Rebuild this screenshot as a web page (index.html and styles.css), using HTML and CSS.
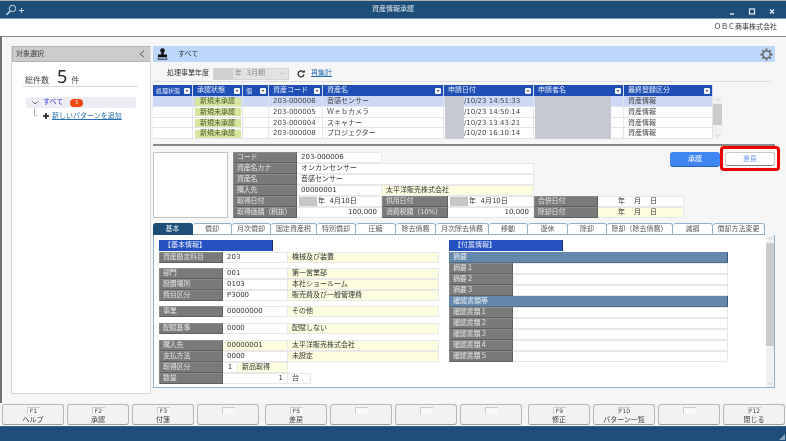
FILE: index.html
```html
<!DOCTYPE html>
<html lang="ja">
<head>
<meta charset="utf-8">
<title>資産情報承認</title>
<link rel="stylesheet" href="styles.css">
</head>
<body>
<div class="window">
  <header class="titlebar">
    <svg class="logo" width="20" height="12" viewBox="0 0 20 12"><circle cx="7.5" cy="4.5" r="3.2" fill="none" stroke="#cfe0ee" stroke-width="1"/><path d="M5.2 7 L1.5 10.8" stroke="#cfe0ee" stroke-width="1.4"/><path d="M14 6.5h5M16.5 4v5" stroke="#cfe0ee" stroke-width="1"/></svg>
    <div class="title">資産情報承認</div>
    <div class="winctl">
      <svg width="48" height="10" viewBox="0 0 48 10"><path d="M1 9h4" stroke="#e8f0f6" stroke-width="1.4"/><rect x="20.5" y="4" width="5" height="5" fill="none" stroke="#e8f0f6" stroke-width="1.2"/><path d="M41 4.5l4 4M45 4.5l-4 4" stroke="#e8f0f6" stroke-width="1.3"/></svg>
    </div>
  </header>
  <div class="company">ＯＢＣ商事株式会社</div>
  <main class="main">
    <aside class="side">
      <div class="side-head"><span>対象選択</span><svg width="6" height="8" viewBox="0 0 6 8"><path d="M5 1L1 4l4 3" fill="none" stroke="#444" stroke-width="0.8"/></svg></div>
      <div class="total"><span>総件数</span><b>5</b><span>件</span></div>
      <div class="tree-sel">
        <svg width="6" height="4" viewBox="0 0 6 4"><path d="M0.5 0.5L3 3l2.5-2.5" fill="none" stroke="#445" stroke-width="0.8"/></svg>
        <span class="tree-all">すべて</span><span class="badge">5</span>
      </div>
      <div class="tree-add">
        <span class="elbow"></span>
        <svg width="6" height="6" viewBox="0 0 6 6"><path d="M3 0v6M0 3h6" stroke="#111" stroke-width="1.5"/></svg>
        <a class="link">新しいパターンを追加</a>
      </div>
    </aside>
    <section class="content">
      <div class="banner">
        <svg width="11" height="12" viewBox="0 0 11 12"><circle cx="5.5" cy="2.5" r="2.3" fill="#111"/><rect x="4.3" y="4" width="2.4" height="3" fill="#111"/><rect x="1" y="6.5" width="9" height="2.5" fill="#111"/><rect x="1" y="10" width="9" height="1.5" fill="none" stroke="#111" stroke-width="0.6"/></svg>
        <span class="banner-text">すべて</span>
        <svg class="gear" width="13" height="13" viewBox="0 0 13 13"><g stroke="#666" stroke-width="1.8"><path d="M6.5 0.5v12M0.5 6.5h12M2.3 2.3l8.4 8.4M10.7 2.3l-8.4 8.4"/></g><circle cx="6.5" cy="6.5" r="3.6" fill="#bcd7fb" stroke="#666" stroke-width="1.3"/></svg>
      </div>
      <div class="yearrow">
        <span>処理事業年度</span>
        <div class="yearsel"><i class="yearmask"></i><span>年&nbsp;&nbsp;3月期</span><svg width="5" height="3" viewBox="0 0 5 3"><path d="M0.5 0.5L2.5 2.5l2-2" fill="none" stroke="#aaa" stroke-width="0.6"/></svg></div>
        <svg class="refresh" width="8" height="8" viewBox="0 0 8 8"><path d="M6.6 2.2A3 3 0 1 0 7 4.5" fill="none" stroke="#222" stroke-width="1.2"/><path d="M5 2.6h2.8V0z" fill="#222"/></svg>
        <a class="link">再集計</a>
      </div>
      <div class="gridwrap">
        <div class="table">
          <div class="trow thead">
            <div class="th small">処理状態<i></i></div><div class="th">承認状態<i></i></div><div class="th small">個<i></i></div><div class="th">資産コード<i></i></div><div class="th">資産名<i></i></div><div class="th">申請日付<i></i></div><div class="th">申請者名<i></i></div><div class="th">最終登録区分<i></i></div>
          </div>
          <div class="trow sel">
            <div class="td"></div><div class="td"><span class="tag">新規未承認</span></div><div class="td"></div><div class="td">203-000006</div><div class="td">音感センサー</div><div class="td date"><i class="mask"></i>/10/23 14:51:33</div><div class="td"><i class="mask wide"></i></div><div class="td">資産情報</div>
          </div>
          <div class="trow">
            <div class="td"></div><div class="td"><span class="tag">新規未承認</span></div><div class="td"></div><div class="td">203-000005</div><div class="td">Ｗｅｂカメラ</div><div class="td date"><i class="mask"></i>/10/23 14:50:14</div><div class="td"><i class="mask wide"></i></div><div class="td">資産情報</div>
          </div>
          <div class="trow">
            <div class="td"></div><div class="td"><span class="tag">新規未承認</span></div><div class="td"></div><div class="td">203-000004</div><div class="td">スキャナー</div><div class="td date"><i class="mask"></i>/10/23 13:43:21</div><div class="td"><i class="mask wide"></i></div><div class="td">資産情報</div>
          </div>
          <div class="trow">
            <div class="td"></div><div class="td"><span class="tag">新規未承認</span></div><div class="td"></div><div class="td">203-000008</div><div class="td">プロジェクター</div><div class="td date"><i class="mask"></i>/10/20 16:10:14</div><div class="td"><i class="mask wide"></i></div><div class="td">資産情報</div>
          </div>
        </div>
        <div class="vscroll grid-scroll">
          <svg width="5" height="3" viewBox="0 0 5 3"><path d="M0.5 2.5L2.5 0.5l2 2" fill="none" stroke="#b0b0b0" stroke-width="0.6"/></svg>
          <i class="thumb"></i>
          <svg class="down" width="5" height="3" viewBox="0 0 5 3"><path d="M0.5 0.5L2.5 2.5l2-2" fill="none" stroke="#b0b0b0" stroke-width="0.6"/></svg>
        </div>
      </div>
      <div class="splitter"></div>
      <div class="detail">
        <div class="photo"></div>
        <div class="info">
          <div class="lbl">コード</div><div class="val">203-000006</div><div class="blank s4"></div>
          <div class="lbl">資産名カナ</div><div class="val s3">オンカンセンサー</div><div class="blank s2"></div>
          <div class="lbl">資産名</div><div class="val s3">音感センサー</div><div class="blank s2"></div>
          <div class="lbl">購入先</div><div class="val">00000001</div><div class="val yel s2">太平洋販売株式会社</div><div class="blank s2"></div>
          <div class="lbl">取得日付</div><div class="val datev"><i class="mask-y"></i><span>年&nbsp;&nbsp;4月10日</span></div><div class="lbl">供用日付</div><div class="val datev"><i class="mask-y"></i><span>年&nbsp;&nbsp;4月10日</span></div><div class="lbl">合併日付</div><div class="val ymd"><span>年</span><span>月</span><span>日</span></div>
          <div class="lbl">取得価額（税抜）</div><div class="val num">100,000</div><div class="lbl">消費税額（10%）</div><div class="val num">10,000</div><div class="lbl">除却日付</div><div class="val yel ymd"><span>年</span><span>月</span><span>日</span></div>
        </div>
        <div class="actions">
          <button class="btn primary">承認</button>
          <div class="hl"><button class="btn plain">差戻</button></div>
        </div>
      </div>
      <div class="tabs">
        <div class="tab on">基本</div><div class="tab">償却</div><div class="tab">月次償却</div><div class="tab">固定資産税</div><div class="tab">特別償却</div><div class="tab">圧縮</div><div class="tab">除去債務</div><div class="tab">月次除去債務</div><div class="tab">移動</div><div class="tab">遊休</div><div class="tab">除却</div><div class="tab">除却（除去債務）</div><div class="tab">減損</div><div class="tab">償却方法変更</div>
      </div>
      <div class="panel">
        <div class="panel-body">
          <div class="col">
            <div class="sect">【基本情報】</div>
            <div class="frow"><div class="lbl">資産勘定科目</div><div class="val">203</div><div class="val yel">機械及び装置</div></div>
            <div class="frow gap5"><div class="lbl">部門</div><div class="val">001</div><div class="val yel">第一営業部</div></div>
            <div class="frow"><div class="lbl">設置場所</div><div class="val">0103</div><div class="val yel">本社ショールーム</div></div>
            <div class="frow"><div class="lbl">費目区分</div><div class="val">P3000</div><div class="val yel">販売費及び一般管理費</div></div>
            <div class="frow gap5"><div class="lbl">事業</div><div class="val">00000000</div><div class="val yel">その他</div></div>
            <div class="frow gap6"><div class="lbl">配賦基準</div><div class="val">0000</div><div class="val yel">配賦しない</div></div>
            <div class="frow gap6"><div class="lbl">購入先</div><div class="val yel">00000001</div><div class="val yel">太平洋販売株式会社</div></div>
            <div class="frow"><div class="lbl">支払方法</div><div class="val">0000</div><div class="val yel">未設定</div></div>
            <div class="frow kubun"><div class="lbl">取得区分</div><div class="val center">1</div><div class="val yel">新品取得</div></div>
            <div class="frow qty"><div class="lbl">数量</div><div class="val num">1</div><div class="val">台</div></div>
          </div>
          <div class="col">
            <div class="sect">【付属情報】</div>
            <div class="subhead">摘要</div>
            <div class="frow2"><div class="lbl">摘要１</div><div class="val"></div></div>
            <div class="frow2"><div class="lbl">摘要２</div><div class="val"></div></div>
            <div class="frow2"><div class="lbl">摘要３</div><div class="val"></div></div>
            <div class="subhead">確認書類等</div>
            <div class="frow2"><div class="lbl">確認書類１</div><div class="val"></div></div>
            <div class="frow2"><div class="lbl">確認書類２</div><div class="val"></div></div>
            <div class="frow2"><div class="lbl">確認書類３</div><div class="val"></div></div>
            <div class="frow2"><div class="lbl">確認書類４</div><div class="val"></div></div>
            <div class="frow2"><div class="lbl">確認書類５</div><div class="val"></div></div>
          </div>
        </div>
        <div class="vscroll panel-scroll">
          <svg width="5" height="3" viewBox="0 0 5 3"><path d="M0.5 2.5L2.5 0.5l2 2" fill="none" stroke="#b0b0b0" stroke-width="0.6"/></svg>
          <i class="thumb"></i>
          <svg class="down" width="5" height="3" viewBox="0 0 5 3"><path d="M0.5 0.5L2.5 2.5l2-2" fill="none" stroke="#b0b0b0" stroke-width="0.6"/></svg>
        </div>
      </div>
    </section>
  </main>
  <nav class="fkeys">
    <div class="fgroup">
      <button class="fk"><span class="fn">F1</span><span>ヘルプ</span></button>
      <button class="fk"><span class="fn">F2</span><span>承認</span></button>
      <button class="fk"><span class="fn">F3</span><span>付箋</span></button>
      <button class="fk"><span class="fn empty"></span></button>
    </div>
    <div class="fgroup">
      <button class="fk"><span class="fn">F5</span><span>差戻</span></button>
      <button class="fk"><span class="fn empty"></span></button>
      <button class="fk"><span class="fn empty"></span></button>
      <button class="fk"><span class="fn empty"></span></button>
    </div>
    <div class="fgroup">
      <button class="fk"><span class="fn">F9</span><span>修正</span></button>
      <button class="fk"><span class="fn">F10</span><span>パターン一覧</span></button>
      <button class="fk"><span class="fn empty"></span></button>
      <button class="fk"><span class="fn">F12</span><span>閉じる</span></button>
    </div>
  </nav>
  <footer class="statusbar">
    <svg width="6" height="6" viewBox="0 0 6 6"><path d="M6 0v6H0z" fill="#8aa5bb"/></svg>
  </footer>
</div>
</body>
</html>
```
FILE: styles.css
```css
* { box-sizing: border-box; margin: 0; padding: 0; }
html, body { width: 786px; height: 441px; overflow: hidden; background: #fff; }
body { font-family: "DejaVu Sans", "Noto Sans CJK JP", sans-serif; font-size: 7px; line-height: 1; color: #333; }
i { display: block; font-style: normal; }
button { font-family: inherit; font-size: 7px; line-height: 1; }

.window { width: 786px; height: 441px; display: flex; flex-direction: column; filter: blur(0.3px); }

.titlebar { height: 19px; flex: none; display: grid; grid-template-columns: 1fr auto 1fr; align-items: center; background: #1c4e78; border-top: 1px solid #b0b0b0; border-bottom: 1px solid #7e9ab0; padding: 0 5px; }
.title { color: #dfe8ef; }
.winctl { justify-self: end; padding-right: 4px; display: flex; }

.company { height: 17px; flex: none; background: #fff; display: flex; align-items: center; justify-content: flex-end; padding-right: 9px; color: #333; }

.main { flex: none; height: 367px; display: flex; gap: 2px; background: #f6f6f6; border-top: 1px solid #8c8c8c; border-left: 2px solid #707070; padding: 9px 0 0 9px; }

.side { width: 140px; height: 348px; background: #fff; border: 1px solid #d8d8d8; border-top: 0; }
.side-head { height: 16px; background: #cbcbcb; border: 1px solid #b4b4b4; border-width: 1px 0 1px 1px; display: flex; align-items: center; justify-content: space-between; padding: 0 5px 0 3px; color: #444; }
.total { margin: 3px 12px 0 11px; height: 22px; border-bottom: 1px solid #d6d6d6; display: flex; align-items: baseline; font-size: 8px; padding: 0 0 0 2px; color: #444; }
.total b { font-weight: 400; font-size: 18px; margin: 0 4px 0 8px; color: #222; line-height: 22px; font-family: "Noto Sans", sans-serif; }
.tree-sel { margin: 10px 14px 0 14px; height: 11px; background: #ecedf3; border-radius: 3px; display: flex; align-items: center; padding-left: 6px; }
.tree-all { color: #3a3ae0; margin-left: 5px; }
.badge { margin-left: 7px; width: 13px; height: 8px; border-radius: 4px; background: #f0480f; color: #fff; font-size: 5px; display: flex; align-items: center; justify-content: center; }
.tree-add { margin: 1px 0 0 22px; height: 14px; display: flex; align-items: center; gap: 3px; }
.elbow { width: 3px; height: 8px; margin-top: -8px; margin-right: 3px; border-left: 1px solid #bbb; border-bottom: 1px solid #bbb; }
.link { color: #2a6fb0; text-decoration: underline; }

.content { width: 622px; display: flex; flex-direction: column; }
.banner { height: 16px; flex: none; background: #bcd7fb; display: flex; align-items: center; padding: 0 2px 0 4px; }
.banner-text { margin-left: 10px; }
.gear { margin-left: auto; }
.yearrow { height: 20px; width: 618px; flex: none; border-bottom: 1px solid #dcdcdc; display: flex; align-items: center; padding: 4px 0 0 14px; }
.yearsel { width: 76px; height: 12px; margin-left: 4px; background: #e2e2e2; border: 1px solid #d4d4d4; display: flex; align-items: center; color: #888; padding-right: 3px; }
.yearmask { width: 19px; height: 10px; background: #cfcfcf; margin-right: 2px; }
.yearsel svg { margin-left: auto; }
.refresh { margin-left: 8px; margin-right: 6px; }

.gridwrap { margin-top: 3px; display: flex; flex: none; height: 54px; }
.table { width: 560px; background: #fff; }
.trow { display: grid; grid-template-columns: 40px 50px 26px 54px 121px 90px 90px 89px; height: 10.75px; border-bottom: 1px solid #e2e5ea; }
.trow.thead { height: 11px; background: #1f4fb4; border-bottom: 0; }
.trow.sel { background: #cdd8f5; }
.th { color: #e4ebfa; display: flex; align-items: center; justify-content: space-between; padding: 0 2px 0 4px; border-right: 1px solid #d5def0; white-space: nowrap; }
.th.small { font-size: 6px; padding-left: 3px; }
.th i { width: 6px; height: 6px; background: #f4f4f4; border-radius: 1px; flex: none; display: flex; align-items: center; justify-content: center; }
.th i::after { content: ""; width: 0; height: 0; border: 1.5px solid transparent; border-top: 2px solid #222; border-bottom: 0; }
.td { display: flex; align-items: center; padding-left: 4px; border-right: 1px solid #e2e5ea; white-space: nowrap; color: #444; }
.td:nth-child(2) { justify-content: center; padding: 0; }
.tag { width: 46px; height: 8px; background: #d7e69c; display: flex; align-items: center; justify-content: center; color: #4a5a32; }
.date { padding-left: 1px; }
.mask { width: 19px; height: 11px; background: #c6c9cf; flex: none; }
.mask.wide { width: 76px; margin-left: -3px; }
.vscroll { background: #f1f1f1; flex: none; display: flex; flex-direction: column; align-items: center; }
.vscroll svg { flex: none; margin-top: 2px; }
.vscroll .down { margin-top: auto; margin-bottom: 2px; }
.thumb { background: #cbcbcb; width: 100%; margin-top: 3px; }
.grid-scroll { width: 9px; height: 43px; margin-top: 11px; }
.grid-scroll .thumb { height: 21px; }
.splitter { height: 2px; margin-top: 5px; background: #8a8a8a; flex: none; }

.detail { margin-top: 6px; height: 66px; display: flex; flex: none; position: relative; }
.photo { width: 75px; height: 66px; background: #fff; border: 1px solid #c4c4c4; margin-right: 5px; }
.info { width: 451px; display: grid; grid-template-columns: 64px 85px 66px 86px 64px 86px; grid-auto-rows: 11px; align-content: start; }
.lbl { background: #7a7a7a; color: #e2e2e2; display: flex; align-items: center; padding-left: 3px; border: 1px solid; border-color: #8a8a8a #5f5f5f #5f5f5f #8a8a8a; white-space: nowrap; letter-spacing: -0.2px; }
.val { background: #fff; display: flex; align-items: center; padding-left: 4px; border: 1px solid #e8e8e8; border-width: 1px 1px 1px 0; white-space: nowrap; color: #333; min-width: 0; }
.yel { background: #fdfde0; }
.s2 { grid-column: span 2; }
.s3 { grid-column: span 3; }
.s4 { grid-column: span 4; }
.num { justify-content: flex-end; padding: 0 4px 0 0; }
.datev { padding-left: 2px; }
.mask-y { width: 18px; height: 9px; background: #c6c6c6; margin-right: 1px; flex: none; }
.ymd { gap: 9px; padding-left: 20px; }

.actions { position: absolute; left: 517px; top: 0; display: flex; gap: 5px; }
.btn { width: 50px; height: 15px; border-radius: 3px; }
.primary { background: #3f86f2; color: #fff; border: 0; border-bottom: 1px solid #2a62b8; }
.plain { background: #fff; color: #6d9cf0; border: 1px solid #c8c8c8; border-bottom: 1.5px solid #8a8a8a; height: 14px; display: block; }
.hl { position: absolute; left: 50px; top: -6px; width: 60px; height: 25px; border: 3px solid #ee0000; border-radius: 4px; padding: 3px 0 0 2px; }

.tabs { margin-top: 5px; height: 12px; width: 612px; flex: none; display: grid; grid-template-columns: 40px 39px 39px 46px 39px 40px 40px 53px 39px 40px 39px 66px 40px 52px; }
.tab { background: #fff; border: 1px solid #8fb0cc; border-left: 0; border-radius: 3px 3px 0 0; display: flex; align-items: center; justify-content: center; color: #555; white-space: nowrap; }
.tab.on { background: #1c4e78; color: #e8eef4; border-color: #1c4e78; }

.panel { height: 153px; flex: none; background: #fff; border: 1px solid #8fb0cc; border-top: 0; display: flex; }
.panel-body { flex: 1; display: grid; grid-template-columns: 290px 279px; padding: 5px 0 0 5px; }
.sect { width: 114px; height: 11px; background: #2450c0; color: #e8eefc; display: flex; align-items: center; padding-left: 5px; margin-bottom: 1px; border-right: 1px solid #1a2f70; }
.frow { display: grid; grid-template-columns: 64px 65px 151px; height: 11px; }
.frow.gap5 { margin-top: 5px; }
.frow.gap6 { margin-top: 6px; }
.frow.kubun { grid-template-columns: 64px 15px 50px; }
.frow.qty { grid-template-columns: 64px 65px 23px; }
.center { justify-content: center; padding: 0; }
.subhead { width: 279px; height: 11px; background: #6488ac; color: #e8eef4; display: flex; align-items: center; padding-left: 4px; border-right: 1px solid #3e5a78; border-bottom: 1px solid #4f6e8c; }
.frow2 { display: grid; grid-template-columns: 64px 215px; height: 11px; }
.panel-scroll { width: 8px; height: 100%; }
.panel-scroll .thumb { height: 103px; }

.fkeys { height: 23px; flex: none; background: #f4f4f4; display: grid; grid-template-columns: repeat(3, 256px); gap: 7px; padding: 1px 2px 0; }
.fgroup { display: grid; grid-template-columns: repeat(4, 62px); gap: 3px; }
.fk { height: 21px; background: #f2f2f2; border: 1px solid #b8b8b8; border-bottom-color: #9a9a9a; border-radius: 3px; display: flex; flex-direction: column; align-items: center; gap: 3px; padding-top: 2px; color: #444; }
.fn { font-size: 6px; min-width: 13px; height: 7px; background: #f8f8f8; border: 1px solid #ccc; border-width: 1px 0 0 1px; text-align: center; line-height: 6px; }
.fn.empty { width: 13px; }

.statusbar { flex: 1; background: #1c4e78; display: flex; justify-content: flex-end; align-items: flex-end; border-top: 1px solid #33648c; padding: 0 1px 1px 0; }
```
